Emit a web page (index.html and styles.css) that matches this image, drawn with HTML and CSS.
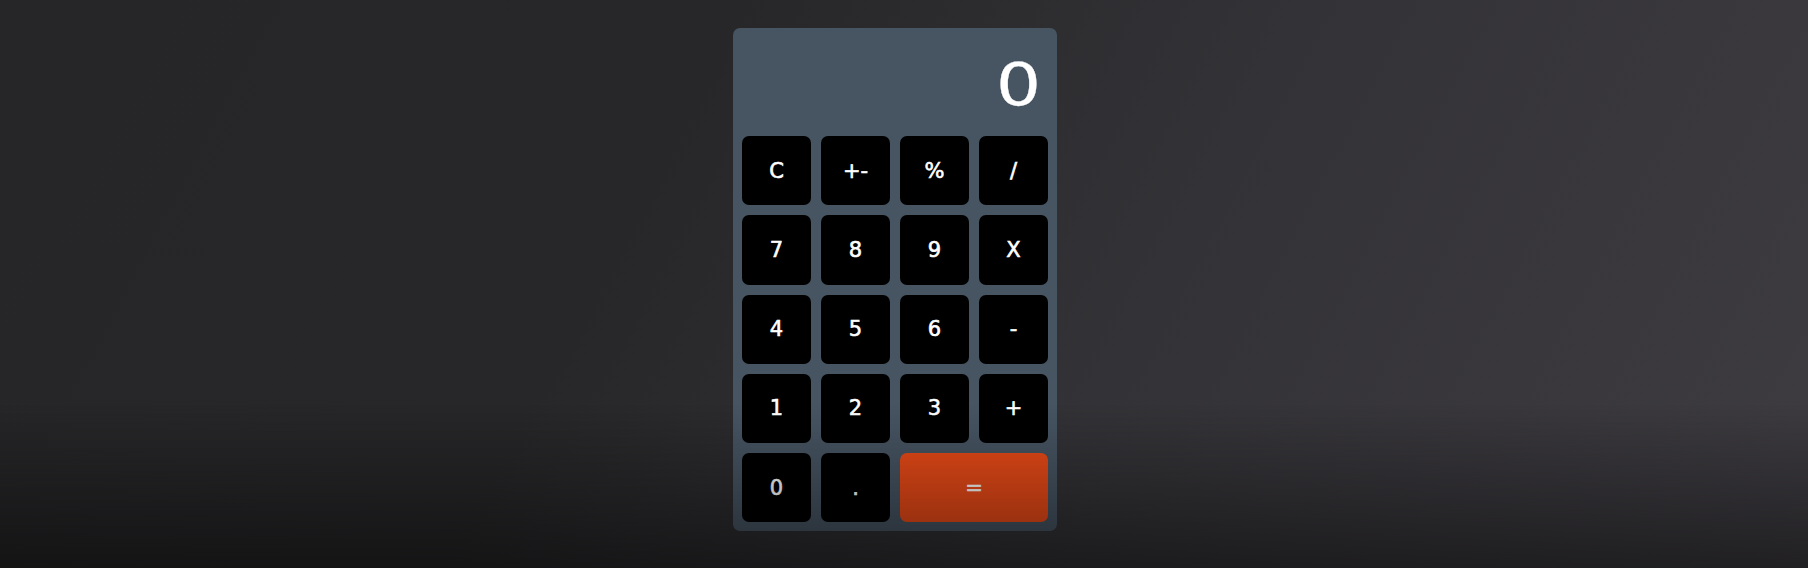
FILE: index.html
```html
<!DOCTYPE html>
<html lang="en">
<head>
<meta charset="utf-8">
<title>Calculator</title>
<link rel="stylesheet" href="styles.css">
</head>
<body>
<main class="page">
  <div class="calculator">
    <div class="display"><span class="display-value">0</span></div>
    <button class="key">C</button>
    <button class="key">+-</button>
    <button class="key">%</button>
    <button class="key">/</button>
    <button class="key">7</button>
    <button class="key">8</button>
    <button class="key">9</button>
    <button class="key">X</button>
    <button class="key">4</button>
    <button class="key">5</button>
    <button class="key">6</button>
    <button class="key">-</button>
    <button class="key">1</button>
    <button class="key">2</button>
    <button class="key">3</button>
    <button class="key">+</button>
    <button class="key">0</button>
    <button class="key">.</button>
    <button class="key key-equals">=</button>
  </div>
</main>
</body>
</html>
```

FILE: styles.css
```css
html, body {
  margin: 0;
  padding: 0;
}

body {
  width: 100%;
  height: 568px;
  overflow: hidden;
  background: linear-gradient(118deg, #262628 0%, #272729 35%, #333236 62%, #3e3c41 100%);
  font-family: "DejaVu Sans", "Open Sans", sans-serif;
  position: relative;
}

body::after {
  content: "";
  position: fixed;
  left: 0;
  right: 0;
  top: 0;
  bottom: 0;
  pointer-events: none;
  background: linear-gradient(180deg, rgba(0,0,0,0) 0px, rgba(0,0,0,0) 404px, rgba(0,0,0,0.47) 568px);
}

.page {
  display: flex;
  justify-content: center;
  padding-top: 28px;
  padding-right: 18px;
}

.calculator {
  padding: 9px;
  background: #475563;
  border-radius: 7px;
  display: grid;
  grid-template-columns: repeat(4, 69px);
  grid-template-rows: 89px;
  grid-auto-rows: 69.25px;
  gap: 10px;
}

.display {
  grid-column: 1 / -1;
  display: flex;
  align-items: center;
  justify-content: flex-end;
  padding-right: 7px;
  padding-top: 6px;
  color: #ffffff;
  font-size: 58px;
  font-weight: 400;
  line-height: 1;
}

.display-value {
  display: inline-block;
  transform: scaleX(1.22);
  transform-origin: right center;
  -webkit-text-stroke: 0.3px #ffffff;
}

.key {
  border: none;
  margin: 0;
  padding: 0;
  background: #000000;
  color: #ffffff;
  border-radius: 7px;
  font-family: inherit;
  font-size: 21px;
  font-weight: 400;
  -webkit-text-stroke: 0.6px #ffffff;
  cursor: pointer;
}

.key-equals {
  grid-column: span 2;
  background: #eb4b18;
}
```
